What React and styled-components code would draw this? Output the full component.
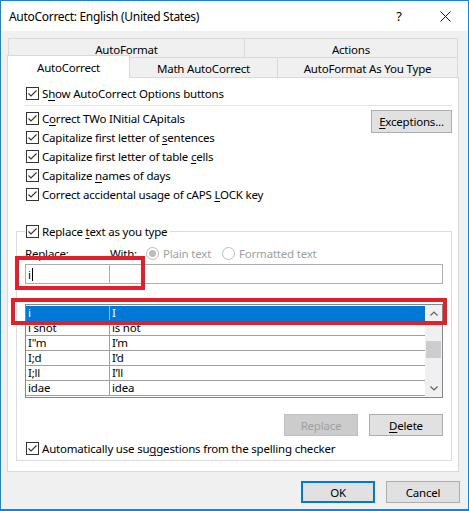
import styled, { createGlobalStyle } from "styled-components";

const GlobalStyle = createGlobalStyle`
  html, body { margin: 0; padding: 0; background: #fff; }
  body {
    font-family: "Noto Sans", "Open Sans", sans-serif;
    font-size: 11.5px;
    letter-spacing: -0.2px;
    color: #000;
  }
  * { box-sizing: border-box; }
`;

const Window = styled.div`
  width: 469px;
  height: 511px;
  border: 1px solid #1883d7;
  border-bottom-width: 2px;
  background: #f0f0f0;
  display: flex;
  flex-direction: column;
  overflow: hidden;
`;

const TitleBar = styled.div`
  height: 30px;
  background: #fff;
  display: flex;
  align-items: center;
  padding-left: 8px;
  flex: none;
`;

const TitleText = styled.div`
  flex: 1;
  font-size: 12px;
  letter-spacing: -0.3px;
`;

const TitleButton = styled.div`
  width: ${(p) => p.$w}px;
  height: 30px;
  display: flex;
  align-items: center;
  justify-content: center;
  margin-left: ${(p) => p.$gap || 0}px;
  font-size: 13px;
`;

const Body = styled.div`
  padding: 7px 9px 0 6px;
  display: flex;
  flex-direction: column;
`;

const TabRow = styled.div`
  display: flex;
  height: ${(p) => p.$h}px;
  margin: ${(p) => p.$margin};
  align-items: flex-start;
`;

const Tab = styled.div`
  height: ${(p) => (p.$active ? 23 : p.$h)}px;
  width: ${(p) => (p.$w ? `${p.$w}px` : "auto")};
  flex: ${(p) => (p.$w ? "none" : 1)};
  margin-left: ${(p) => (p.$first ? 0 : -1)}px;
  margin-top: ${(p) => (p.$active ? -2 : 0)}px;
  border: 1px solid #d9d9d9;
  border-bottom: none;
  background: ${(p) => (p.$active ? "#fff" : "#f0f0f0")};
  position: ${(p) => (p.$active ? "relative" : "static")};
  z-index: ${(p) => (p.$active ? 2 : "auto")};
  display: flex;
  align-items: center;
  justify-content: center;
  padding-top: ${(p) => (p.$active ? 0 : 2)}px;
  white-space: nowrap;
`;

const Panel = styled.div`
  border: 1px solid #d9d9d9;
  background: #fff;
  padding: 6px 6px 10px 8px;
  display: flex;
  flex-direction: column;
`;

const TopOptions = styled.div`
  margin-left: 9px;
  display: flex;
  flex-direction: column;
`;

const CheckRow = styled.label`
  height: 19px;
  display: flex;
  align-items: center;
  padding-left: 1px;
  gap: 3px;
  white-space: nowrap;
  margin-top: ${(p) => p.$mt || 0}px;
`;

const Box = styled.span`
  width: 13px;
  height: 13px;
  border: 1px solid #333;
  background: #fff;
  display: inline-flex;
  align-items: center;
  justify-content: center;
  flex: none;
`;

const U = styled.span`
  text-decoration: underline;
  text-underline-offset: 2px;
`;

const Separator = styled.div`
  height: 1px;
  background: #e3e3e3;
  margin: 2px 0 3px;
`;

const OptionsBlock = styled.div`
  display: flex;
  justify-content: space-between;
  align-items: flex-start;
`;

const Column = styled.div`
  display: flex;
  flex-direction: column;
`;

const Button = styled.div`
  width: ${(p) => p.$w || 74}px;
  height: ${(p) => p.$h || 22}px;
  margin-top: ${(p) => p.$mt || 0}px;
  display: flex;
  align-items: center;
  justify-content: center;
  background: ${(p) => (p.$disabled ? "#cccccc" : "#e1e1e1")};
  border: ${(p) => (p.$default ? "2px solid #0078d7" : p.$disabled ? "1px solid #bfbfbf" : "1px solid #adadad")};
  color: ${(p) => (p.$disabled ? "#a0a0a0" : "#000")};
`;

const Group = styled.fieldset`
  margin: 19px 0 0;
  padding: 0 8px 2px;
  border: 1px solid #dcdcdc;
  min-width: 0;
`;

const Legend = styled.legend`
  padding: 0 3px 0 1px;
  height: 16px;
  display: flex;
  align-items: center;
  gap: 3px;
`;

const LabelsRow = styled.div`
  display: flex;
  align-items: center;
  height: 16px;
  margin-top: 6px;
  white-space: nowrap;
`;

const FieldLabel = styled.div`
  width: ${(p) => p.$w}px;
  flex: none;
`;

const RadioItem = styled.div`
  width: ${(p) => (p.$w ? `${p.$w}px` : "auto")};
  display: flex;
  align-items: center;
  gap: 4px;
  color: #a0a0a0;
`;

const Radio = styled.span`
  width: 13px;
  height: 13px;
  border-radius: 50%;
  border: 1px solid #bcbcbc;
  background: #fff;
  display: inline-flex;
  align-items: center;
  justify-content: center;
  &::after {
    content: "";
    width: 7px;
    height: 7px;
    border-radius: 50%;
    background: ${(p) => (p.$on ? "#bcbcbc" : "transparent")};
  }
`;

const InputRow = styled.div`
  display: flex;
  height: 20px;
  margin-top: 3px;
  position: relative;
`;

const TextBox = styled.div`
  width: ${(p) => (p.$w ? `${p.$w}px` : "auto")};
  flex: ${(p) => (p.$w ? "none" : 1)};
  margin-left: ${(p) => (p.$first ? 0 : -1)}px;
  border: 1px solid #abadb3;
  background: #fff;
  padding-left: 2px;
  display: flex;
  align-items: center;
`;

const Caret = styled.span`
  width: 1px;
  height: 13px;
  background: #000;
  margin-left: 1px;
`;

const Annotation = styled.div`
  position: absolute;
  left: ${(p) => p.$l}px;
  top: ${(p) => p.$t}px;
  width: ${(p) => p.$w}px;
  height: ${(p) => p.$h}px;
  border: 4px solid #e3202a;
  pointer-events: none;
  z-index: 3;
`;

const List = styled.div`
  margin-top: 20px;
  height: 94px;
  border: 1px solid #828790;
  display: flex;
  position: relative;
  background: #fff;
`;

const Rows = styled.div`
  flex: 1;
  padding-top: 1px;
  overflow: hidden;
`;

const Row = styled.div`
  height: 15px;
  display: grid;
  grid-template-columns: 84px 1fr;
  background: ${(p) => (p.$selected ? "#0078d7" : "#fff")};
  color: ${(p) => (p.$selected ? "#fff" : "#000")};
  border-bottom: 1px solid ${(p) => (p.$selected ? "#0078d7" : "#a0a0a0")};
`;

const Cell = styled.div`
  padding-left: 2px;
  height: 14px;
  line-height: 14px;
  overflow: hidden;
  white-space: nowrap;
  border-right: ${(p) => (p.$divider ? `1px solid ${p.$selected ? "#8cbde6" : "#a0a0a0"}` : "none")};
`;

const ScrollBar = styled.div`
  width: 17px;
  background: #f0f0f0;
  display: flex;
  flex-direction: column;
  align-items: center;
`;

const ScrollArrow = styled.div`
  height: 17px;
  width: 17px;
  display: flex;
  align-items: center;
  justify-content: center;
`;

const Track = styled.div`
  flex: 1;
  width: 100%;
  padding: 19px 1px 0;
`;

const Thumb = styled.div`
  height: 17px;
  background: #cdcdcd;
`;

const ButtonRow = styled.div`
  display: flex;
  justify-content: flex-end;
  gap: 11px;
  margin-top: ${(p) => p.$mt}px;
  margin-right: ${(p) => p.$mr || 0}px;
`;

const Check = () => (
  <Box>
    <svg width="11" height="11" viewBox="0 0 11 11">
      <path d="M1.5 5.5 L4 8 L9.5 2.5" fill="none" stroke="#333" strokeWidth="1.1" />
    </svg>
  </Box>
);

const Chevron = ({ up }) => (
  <svg width="8" height="5" viewBox="0 0 8 5">
    <path d={up ? "M0.5 4.5 L4 1 L7.5 4.5" : "M0.5 0.5 L4 4 L7.5 0.5"} fill="none" stroke="#606060" strokeWidth="1.2" />
  </svg>
);

const entries = [
  ["i", "I"],
  ["i snot", "is not"],
  ["I\"m", "I’m"],
  ["I;d", "I’d"],
  ["I;ll", "I’ll"],
  ["idae", "idea"],
];

export default function App() {
  return (
    <>
      <GlobalStyle />
      <Window>
        <TitleBar>
          <TitleText>AutoCorrect: English (United States)</TitleText>
          <TitleButton $w={36}>?</TitleButton>
          <TitleButton $w={46} $gap={5}>
            <svg width="11" height="11" viewBox="0 0 11 11">
              <path d="M0.5 0.5 L10.5 10.5 M10.5 0.5 L0.5 10.5" stroke="#111" strokeWidth="1" />
            </svg>
          </TitleButton>
        </TitleBar>
        <Body>
          <TabRow $h={19} $margin="0 1px">
            <Tab $first $w={237} $h={19}>AutoFormat</Tab>
            <Tab $h={19}>Actions</Tab>
          </TabRow>
          <TabRow $h={20} $margin="0 1px 0 0">
            <Tab $first $active $w={123}>AutoCorrect</Tab>
            <Tab $w={149} $h={20}>Math AutoCorrect</Tab>
            <Tab $h={20}>AutoFormat As You Type</Tab>
          </TabRow>
          <Panel>
            <TopOptions>
              <CheckRow>
                <Check />
                <span>S<U>h</U>ow AutoCorrect Options buttons</span>
              </CheckRow>
              <Separator />
              <OptionsBlock>
                <Column>
                  <CheckRow><Check /><span>C<U>o</U>rrect TWo INitial CApitals</span></CheckRow>
                  <CheckRow><Check /><span>Capitalize first letter of <U>s</U>entences</span></CheckRow>
                  <CheckRow><Check /><span>Capitalize first letter of table <U>c</U>ells</span></CheckRow>
                  <CheckRow><Check /><span>Capitalize <U>n</U>ames of days</span></CheckRow>
                  <CheckRow><Check /><span>Correct accidental usage of cAPS <U>L</U>OCK key</span></CheckRow>
                </Column>
                <Button $w={81} $h={23} $mt={1}><span><U>E</U>xceptions...</span></Button>
              </OptionsBlock>
            </TopOptions>
            <Group>
              <Legend>
                <Check />
                <span>Replace <U>t</U>ext as you type</span>
              </Legend>
              <LabelsRow>
                <FieldLabel $w={85}>Replace:</FieldLabel>
                <FieldLabel $w={36}>With:</FieldLabel>
                <RadioItem $w={76}><Radio $on />Plain text</RadioItem>
                <RadioItem><Radio />Formatted text</RadioItem>
              </LabelsRow>
              <InputRow>
                <TextBox $first $w={85}>i<Caret /></TextBox>
                <TextBox />
                <Annotation $l={-10} $t={-8} $w={130} $h={34} />
              </InputRow>
              <List>
                <Rows>
                  {entries.map(([from, to], i) => (
                    <Row key={from} $selected={i === 0}>
                      <Cell $divider $selected={i === 0}>{from}</Cell>
                      <Cell>{to}</Cell>
                    </Row>
                  ))}
                </Rows>
                <ScrollBar>
                  <ScrollArrow><Chevron up /></ScrollArrow>
                  <Track><Thumb /></Track>
                  <ScrollArrow><Chevron /></ScrollArrow>
                </ScrollBar>
                <Annotation $l={-15} $t={-7} $w={436} $h={27} />
              </List>
              <ButtonRow $mt={16}>
                <Button $disabled>Replace</Button>
                <Button><span><U>D</U>elete</span></Button>
              </ButtonRow>
              <CheckRow $mt={3}>
                <Check />
                <span>Automatically use su<U>g</U>gestions from the spelling checker</span>
              </CheckRow>
            </Group>
          </Panel>
          <ButtonRow $mt={9} $mr={-1}>
            <Button $default>OK</Button>
            <Button>Cancel</Button>
          </ButtonRow>
        </Body>
      </Window>
    </>
  );
}
